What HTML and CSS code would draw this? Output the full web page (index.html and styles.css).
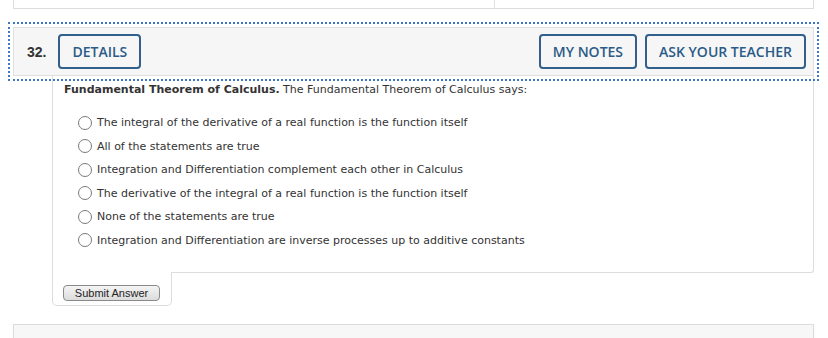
FILE: index.html
```html
<!DOCTYPE html>
<html lang="en">
<head>
<meta charset="utf-8">
<title>Question 32</title>
<link rel="stylesheet" href="styles.css">
</head>
<body>
<div class="prev-card">
  <div class="prev-col"></div>
  <div class="prev-col"></div>
</div>

<div class="q-header">
  <span class="q-num">32.</span>
  <button class="q-btn q-details">DETAILS</button>
  <span class="q-spacer"></span>
  <button class="q-btn">MY NOTES</button>
  <button class="q-btn">ASK YOUR TEACHER</button>
</div>

<div class="q-body">
  <p class="q-text"><b>Fundamental Theorem of Calculus.</b> The Fundamental Theorem of Calculus says:</p>
  <ul class="choices">
    <li class="choice"><span class="radio"></span><span>The integral of the derivative of a real function is the function itself</span></li>
    <li class="choice"><span class="radio"></span><span>All of the statements are true</span></li>
    <li class="choice"><span class="radio"></span><span>Integration and Differentiation complement each other in Calculus</span></li>
    <li class="choice"><span class="radio"></span><span>The derivative of the integral of a real function is the function itself</span></li>
    <li class="choice"><span class="radio"></span><span>None of the statements are true</span></li>
    <li class="choice"><span class="radio"></span><span>Integration and Differentiation are inverse processes up to additive constants</span></li>
  </ul>
</div>
<div class="submit-tab">
  <button class="submit-btn">Submit Answer</button>
</div>

<div class="next-card"></div>
</body>
</html>
```

FILE: styles.css
```css
html, body {
  margin: 0;
  padding: 0;
  background: #ffffff;
  overflow: hidden;
}

body {
  font-family: "DejaVu Sans", Verdana, sans-serif;
  color: #333333;
}

.prev-card {
  margin: 0 14px 0 13px;
  height: 8px;
  border: 1px solid #dddddd;
  border-top: none;
  background: #ffffff;
  display: flex;
}

.prev-col {
  width: 480px;
  border-right: 1px solid #e2e2e2;
}

.prev-col + .prev-col {
  flex: 1;
  border-right: none;
}

.q-header {
  margin: 18px 14px 0 13px;
  height: 49px;
  box-sizing: border-box;
  background: #f6f6f6;
  border: 1px solid #e0e0e0;
  outline: 2px dotted #3f78be;
  outline-offset: 3px;
  padding: 6px 7px 6px 13px;
  display: flex;
  align-items: center;
}

.q-num {
  font-family: "Liberation Sans", Arial, sans-serif;
  font-weight: bold;
  font-size: 14px;
  color: #333333;
}

.q-spacer {
  flex: 1;
}

.q-btn {
  height: 35px;
  box-sizing: border-box;
  padding: 0 12px;
  margin: 0 0 0 8px;
  border: 2px solid #325f8b;
  border-radius: 4px;
  background: #f6f6f6;
  color: #2b5b88;
  font-family: "Open Sans", sans-serif;
  font-weight: 600;
  font-size: 14px;
  line-height: 31px;
}

.q-details {
  margin-left: 12px;
}

.q-body {
  margin: 0 14px 0 52px;
  border: 1px solid #dddddd;
  border-top: none;
  border-bottom-right-radius: 3px;
  padding: 7px 11px 20px 11px;
}

.q-text {
  margin: 0;
  font-size: 11px;
  line-height: 14px;
}

.choices {
  list-style: none;
  margin: 14px 0 0 14px;
  padding: 0;
}

.choice {
  height: 23.5px;
  display: flex;
  align-items: center;
  font-size: 11px;
}

.radio {
  width: 14px;
  height: 14px;
  box-sizing: border-box;
  border: 1px solid #7a7a7a;
  border-radius: 50%;
  background: #ffffff;
  margin-right: 5px;
  flex: none;
}

.submit-tab {
  position: relative;
  width: 120px;
  box-sizing: border-box;
  margin: -1px 0 0 52px;
  height: 34px;
  background: #ffffff;
  border: 1px solid #dddddd;
  border-top: none;
  border-radius: 0 0 5px 5px;
  padding: 10px 0 0 10px;
}

.submit-btn {
  width: 97px;
  height: 16px;
  padding: 0;
  border: 1px solid #8a8a8a;
  border-radius: 4px;
  background: linear-gradient(#f4f4f4, #dcdcdc);
  font-family: "Liberation Sans", Arial, sans-serif;
  font-size: 11px;
  line-height: 14px;
  color: #222222;
}

.next-card {
  margin: 18px 14px 0 13px;
  height: 40px;
  background: #f7f7f7;
  border: 1px solid #dddddd;
  box-shadow: 0 1px 2px rgba(0, 0, 0, 0.06);
}
```
